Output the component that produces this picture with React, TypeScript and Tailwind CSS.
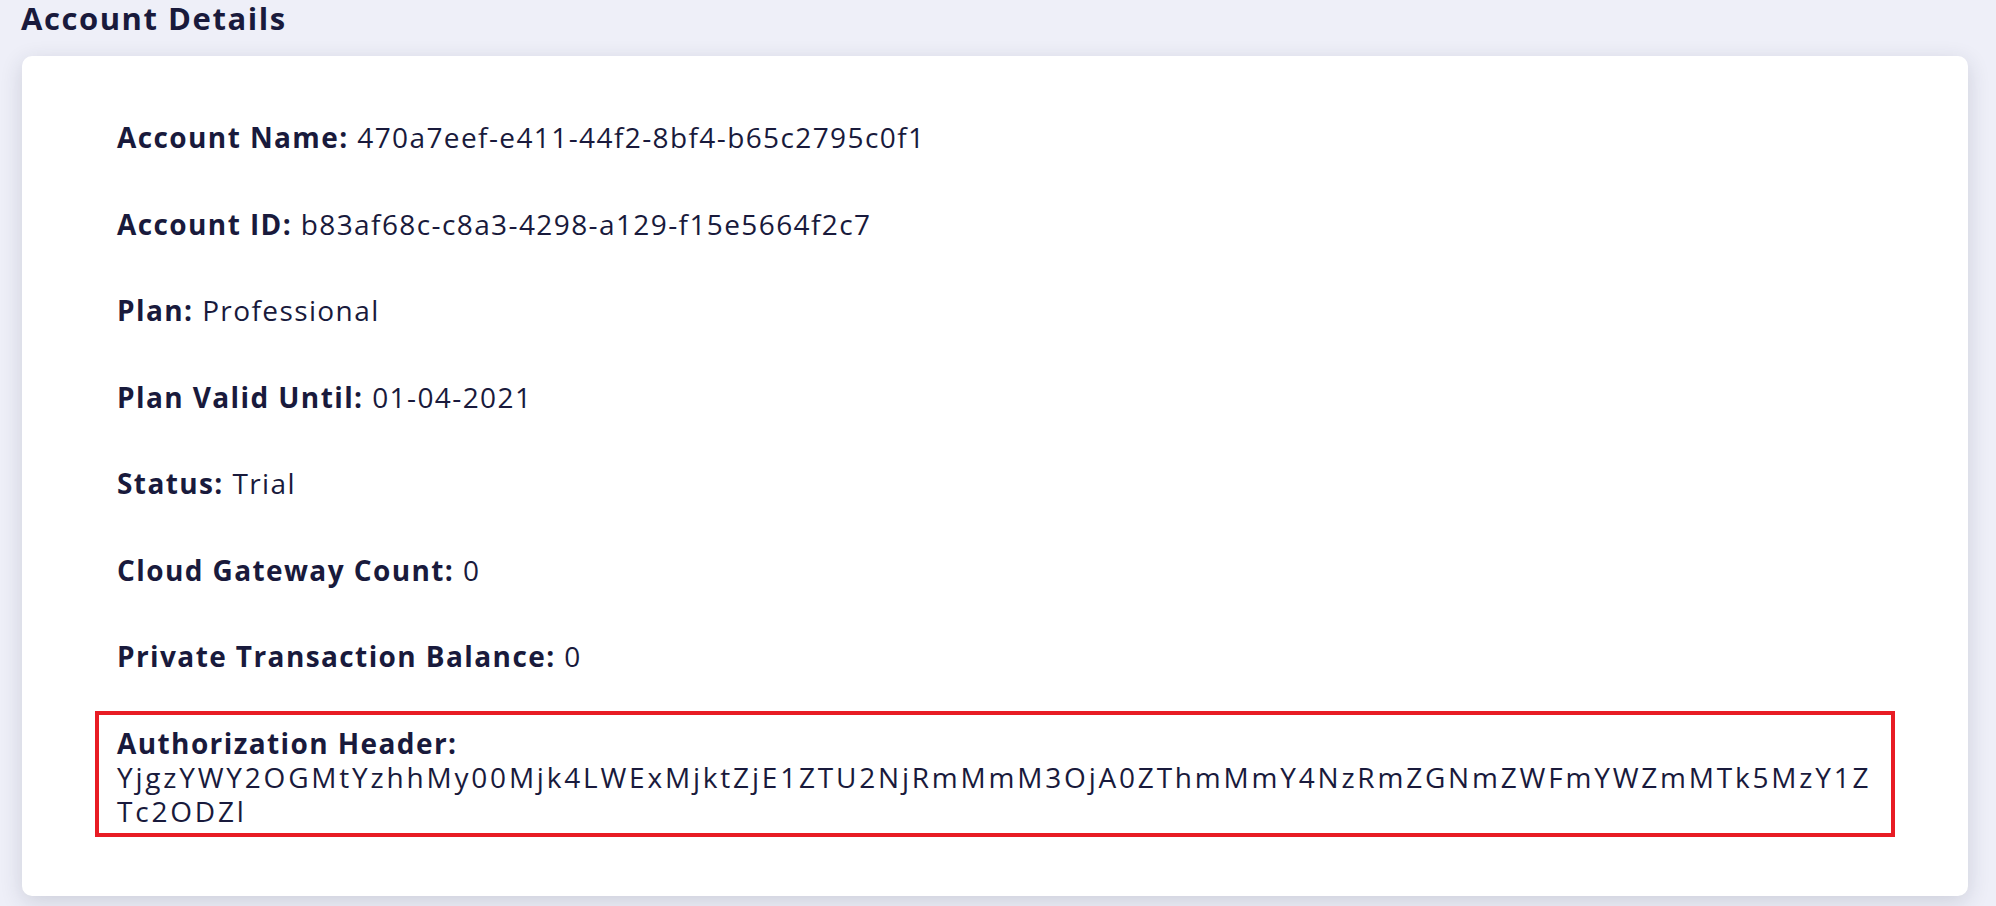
const rows: { label: string; value: string }[] = [
  { label: "Account Name:", value: "470a7eef-e411-44f2-8bf4-b65c2795c0f1" },
  { label: "Account ID:", value: "b83af68c-c8a3-4298-a129-f15e5664f2c7" },
  { label: "Plan:", value: "Professional" },
  { label: "Plan Valid Until:", value: "01-04-2021" },
  { label: "Status:", value: "Trial" },
  { label: "Cloud Gateway Count:", value: "0" },
  { label: "Private Transaction Balance:", value: "0" },
];

const AUTH_HEADER =
  "YjgzYWY2OGMtYzhhMy00Mjk4LWExMjktZjE1ZTU2NjRmMmM3OjA0ZThmMmY4NzRmZGNmZWFmYWZmMTk5MzY1ZTc2ODZl";

export default function App() {
  return (
    <div
      className="min-h-screen bg-[#eeeff8] pt-[1px] text-[#191a3c]"
      style={{ fontFamily: '"Open Sans", "Liberation Sans", sans-serif' }}
    >
      <h2 className="ml-[21px] text-[31px] font-bold leading-[35px] tracking-[0.05em]">
        Account Details
      </h2>

      <div className="mx-[28px] ml-[22px] mt-[20px] rounded-[10px] bg-white px-[73px] pb-[59px] pt-[49px] shadow-[0_6px_22px_rgba(40,44,70,0.16)]">
        <div className="flex flex-col gap-[28.5px] text-[28px] leading-[34px] tracking-[0.05em]">
          {rows.map((row) => (
            <div
              key={row.label}
              className="border-4 border-transparent px-[18px] pb-[5px] pt-[11px]"
            >
              <span className="font-bold">{row.label}</span> {row.value}
            </div>
          ))}

          <div className="border-4 border-[#e81c24] px-[18px] pb-[5px] pt-[11px]">
            <div className="font-bold">Authorization Header:</div>
            <div className="break-all tracking-[0.1em]">{AUTH_HEADER}</div>
          </div>
        </div>
      </div>
    </div>
  );
}
